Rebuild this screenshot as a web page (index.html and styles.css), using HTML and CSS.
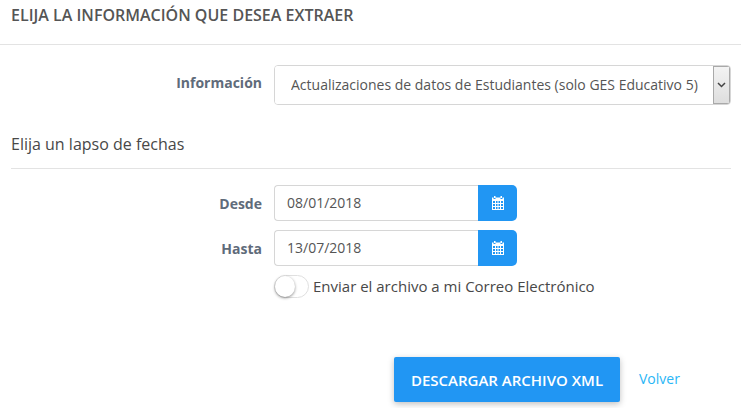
FILE: index.html
```html
<!DOCTYPE html>
<html lang="es">
<head>
	<meta charset="utf-8">
	<title>Extraer información</title>
	<link rel="stylesheet" href="styles.css">
</head>
<body>
	<h1 class="pageTitle">ELIJA LA INFORMACIÓN QUE DESEA EXTRAER</h1>
	<form class="extractForm">
		<div class="row rowInfo">
			<label class="rowLabel">Información</label>
			<div class="selectBox">
				<select class="selectInput">
					<option>Actualizaciones de datos de Estudiantes (solo GES Educativo 5)</option>
				</select>
				<span class="selectArrow">
					<svg width="9" height="6" viewBox="0 0 9 6"><path d="M1 1l3.500 3.500L8 1" fill="none" stroke="#444" stroke-width="1.500"/></svg>
				</span>
			</div>
		</div>
		<h2 class="subTitle">Elija un lapso de fechas</h2>
		<div class="row rowDate">
			<label class="rowLabel">Desde</label>
			<div class="dateBox">
				<input class="dateInput" type="text" value="08/01/2018">
				<button class="dateBtn" type="button">
					<svg width="12" height="14" viewBox="0 0 12 14"><path fill="#fff" fill-rule="evenodd" d="M2 0h1.500v2H2zM8.500 0H10v2H8.500zM0 1.500h1.500V3h2V1.500h5V3h2V1.500H12V14H0zM1 5v2h2V5zm3 0v2h1.500V5zm2.500 0v2H8V5zM9 5v2h2V5zM1 8v2h2V8zm3 0v2h1.500V8zm2.500 0v2H8V8zM9 8v2h2V8zM1 11v2h2v-2zm3 0v2h1.500v-2zm2.500 0v2H8v-2zM9 11v2h2v-2z"/></svg>
				</button>
			</div>
		</div>
		<div class="row rowDate">
			<label class="rowLabel">Hasta</label>
			<div class="dateBox">
				<input class="dateInput" type="text" value="13/07/2018">
				<button class="dateBtn" type="button">
					<svg width="12" height="14" viewBox="0 0 12 14"><path fill="#fff" fill-rule="evenodd" d="M2 0h1.500v2H2zM8.500 0H10v2H8.500zM0 1.500h1.500V3h2V1.500h5V3h2V1.500H12V14H0zM1 5v2h2V5zm3 0v2h1.500V5zm2.500 0v2H8V5zM9 5v2h2V5zM1 8v2h2V8zm3 0v2h1.500V8zm2.500 0v2H8V8zM9 8v2h2V8zM1 11v2h2v-2zm3 0v2h1.500v-2zm2.500 0v2H8v-2zM9 11v2h2v-2z"/></svg>
				</button>
			</div>
		</div>
		<div class="row rowSwitch">
			<span class="switch"><span class="switchKnob"></span></span>
			<span class="switchText">Enviar el archivo a mi Correo Electrónico</span>
		</div>
		<div class="actions">
			<button class="btnDownload" type="button">DESCARGAR ARCHIVO XML</button>
			<a class="linkBack" href="#">Volver</a>
		</div>
	</form>
</body>
</html>
```

FILE: styles.css
```css
* {margin:0; padding:0; box-sizing:border-box;}
html, body {background:#fff;}
body {width:741px; height:408px; overflow:hidden; font-family:"Open Sans", sans-serif; font-size:14px; color:#555;}
.pageTitle {height:45px; padding:4px 11px 0; font-size:16px; line-height:22px; font-weight:600; color:#555; border-bottom:1px solid #e3e3e3;}
.extractForm {padding:20px 10px 0 11px;}
.row {display:flex; align-items:center;}
.rowLabel {width:251px; text-align:right; font-size:14px; font-weight:700; color:#5f6b7a;}
.rowInfo {height:39px;}
.rowInfo .rowLabel {position:relative; top:-2px;}
.selectBox {display:flex; margin-left:12px; width:457px; height:40px; border:1px solid #d6d6d6; border-radius:4px; overflow:hidden;}
.selectInput {flex:1; padding-left:16px; font-family:"Open Sans", sans-serif; font-size:14px; color:#555; border:0; background:#fff; appearance:none; outline:0;}
.selectArrow {display:flex; align-items:center; justify-content:center; width:17px; border:1px solid #a9a9a9; background:linear-gradient(#f3f3f3, #dedede);}
.subTitle {margin-top:21px; margin-bottom:16px; height:44px; padding-top:8px; font-size:16px; line-height:22px; font-weight:400; color:#484848; border-bottom:1px solid #e3e3e3;}
.rowDate {height:36px; margin-bottom:9px;}
.dateBox {display:flex; margin-left:12px; width:243px; height:36px;}
.dateInput {width:204px; height:36px; padding:0 12px 2px; font-family:"Open Sans", sans-serif; font-size:14px; color:#555; border:1px solid #d6d6d6; border-right:0; border-radius:4px 0 0 4px; outline:0;}
.dateBtn {display:flex; align-items:center; justify-content:center; width:39px; height:36px; border:0; border-radius:0 5px 5px 0; background:#2196f3;}
.rowSwitch {margin-left:263px; margin-top:-1px; height:24px;}
.switch {display:block; width:35px; height:23px; border:1px solid #e0e0e0; border-radius:12px; background:#fff;}
.switchKnob {display:block; width:20px; height:21px; border-radius:50%; background:#fff; box-shadow:0 1px 3px rgba(0,0,0,0.45);}
.switchText {margin-left:4px; font-size:15px; color:#484848;}
.actions {display:flex; align-items:center; margin-top:59px; margin-left:383px;}
.btnDownload {width:226px; height:45px; font-family:"Open Sans", sans-serif; font-size:15px; font-weight:600; color:#fff; border:0; border-radius:2px; background:#2196f3; box-shadow:0 2px 6px rgba(0,0,0,0.25);}
.linkBack {margin-left:19px; margin-top:-2px; font-size:14px; color:#29b6f6; text-decoration:none;}
```
